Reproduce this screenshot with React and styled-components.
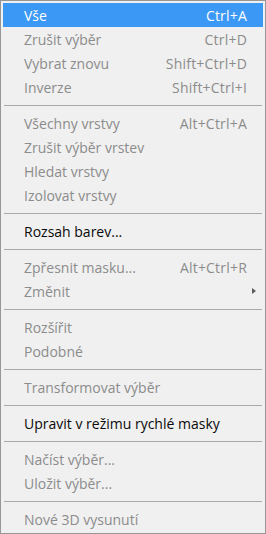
import styled, { createGlobalStyle } from "styled-components";

const GlobalStyle = createGlobalStyle`
  html, body {
    margin: 0;
    padding: 0;
    background: #f0f0f0;
  }
`;

const Menu = styled.div`
  width: 266px;
  height: 534px;
  box-sizing: border-box;
  border: 1px solid #979797;
  background: #f0f0f0;
  padding: 2px;
  display: flex;
  flex-direction: column;
  font-family: "Open Sans", "Noto Sans", sans-serif;
  font-size: 14px;
`;

const Item = styled.div`
  height: 24px;
  flex-shrink: 0;
  display: flex;
  align-items: center;
  justify-content: space-between;
  padding: 0 16px 0 21px;
  position: relative;
  color: ${(props) =>
    props.active ? "#ffffff" : props.enabled ? "#0a0a0a" : "#8c8c8c"};
  background: ${(props) => (props.active ? "#3b98f5" : "transparent")};
  white-space: nowrap;
`;

const Shortcut = styled.span`
  letter-spacing: 0.2px;
`;

const Arrow = styled.span`
  position: absolute;
  right: 7px;
  top: 9px;
  width: 0;
  height: 0;
  border-top: 3.5px solid transparent;
  border-bottom: 3.5px solid transparent;
  border-left: 4px solid #5a5a5a;
`;

const Separator = styled.div`
  height: 12px;
  flex-shrink: 0;
  display: flex;
  align-items: center;
  padding: 0 1px;

  &::after {
    content: "";
    flex: 1;
    height: 1px;
    background: #a9a9a9;
  }
`;

const groups = [
  [
    { label: "Vše", shortcut: "Ctrl+A", active: true },
    { label: "Zrušit výběr", shortcut: "Ctrl+D" },
    { label: "Vybrat znovu", shortcut: "Shift+Ctrl+D" },
    { label: "Inverze", shortcut: "Shift+Ctrl+I" },
  ],
  [
    { label: "Všechny vrstvy", shortcut: "Alt+Ctrl+A" },
    { label: "Zrušit výběr vrstev" },
    { label: "Hledat vrstvy" },
    { label: "Izolovat vrstvy" },
  ],
  [{ label: "Rozsah barev...", enabled: true }],
  [
    { label: "Zpřesnit masku...", shortcut: "Alt+Ctrl+R" },
    { label: "Změnit", submenu: true },
  ],
  [{ label: "Rozšířit" }, { label: "Podobné" }],
  [{ label: "Transformovat výběr" }],
  [{ label: "Upravit v režimu rychlé masky", enabled: true }],
  [{ label: "Načíst výběr..." }, { label: "Uložit výběr..." }],
  [{ label: "Nové 3D vysunutí" }],
];

const App = () => {
  return (
    <>
      <GlobalStyle />
      <Menu>
        {groups.map((group, gi) => (
          <div key={gi} style={{ display: "contents" }}>
            {gi > 0 && <Separator />}
            {group.map((item) => (
              <Item
                key={item.label}
                active={item.active}
                enabled={item.enabled}
              >
                <span>{item.label}</span>
                {item.shortcut && <Shortcut>{item.shortcut}</Shortcut>}
                {item.submenu && <Arrow />}
              </Item>
            ))}
          </div>
        ))}
      </Menu>
    </>
  );
};

export default App;
